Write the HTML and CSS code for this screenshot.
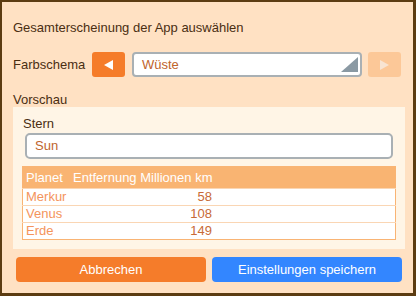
FILE: index.html
```html
<!DOCTYPE HTML>
<html>
<head>
    <title>Einstellungen</title>
    <link rel="stylesheet" href="styles.css">
</head>
<body>
    <div class="window">
        <div class="title">Gesamterscheinung der App auswählen</div>

        <div class="scheme-row">
            <span class="scheme-label">Farbschema</span>
            <button class="nav-btn">
                <svg width="10" height="10" viewBox="0 0 10 10"><polygon points="9,0 9,10 0,5" fill="#ffffff"/></svg>
            </button>
            <div class="select">
                <span>Wüste</span>
                <svg class="select-corner" width="17" height="15" viewBox="0 0 17 15"><polygon points="17,0 17,15 0,15" fill="#8a99a3"/></svg>
            </div>
            <button class="nav-btn disabled">
                <svg width="10" height="10" viewBox="0 0 10 10"><polygon points="0,0 0,10 9,5" fill="#f8e4d2"/></svg>
            </button>
        </div>

        <div class="section-label">Vorschau</div>
        <div class="preview">
            <div class="field-label">Stern</div>
            <div class="field">Sun</div>
            <table class="planets">
                <tr>
                    <th class="col-name">Planet</th>
                    <th class="col-dist">Entfernung Millionen km</th>
                    <th></th>
                </tr>
                <tr><td class="name">Merkur</td><td class="num">58</td><td></td></tr>
                <tr><td class="name">Venus</td><td class="num">108</td><td></td></tr>
                <tr><td class="name">Erde</td><td class="num">149</td><td></td></tr>
            </table>
        </div>

        <div class="actions">
            <button class="btn btn-cancel">Abbrechen</button>
            <button class="btn btn-save">Einstellungen speichern</button>
        </div>
    </div>
</body>
</html>
```
FILE: styles.css
```css
body {
    margin: 0;
    font-family: "Liberation Sans", Arial, sans-serif;
    font-size: 13px;
}

.window {
    width: 416px;
    height: 296px;
    box-sizing: border-box;
    background: #ffe1c3;
    border-style: solid;
    border-color: #5c3c12;
    border-width: 2px 3px 3px 2px;
    padding: 18px 8px 0px 11px;
    color: #4a2e12;
}

.title {
    line-height: 16px;
    height: 16px;
}

.scheme-row {
    display: flex;
    align-items: center;
    margin-top: 16px;
    height: 25px;
}

.scheme-label {
    width: 79px;
}

.nav-btn {
    width: 33px;
    height: 25px;
    border: none;
    border-radius: 3px;
    background: #f57c2a;
    padding: 0;
    display: flex;
    align-items: center;
    justify-content: center;
}

.nav-btn.disabled {
    background: #fcc898;
    margin-left: 6px;
}

.select {
    position: relative;
    width: 230px;
    height: 25px;
    box-sizing: border-box;
    margin-left: 7px;
    border: 2px solid #a9b0b4;
    border-radius: 4px;
    background: #ffffff;
    color: #c0642c;
    padding-left: 8px;
    line-height: 21px;
}

.select-corner {
    position: absolute;
    right: 2px;
    bottom: 3px;
}

.section-label {
    margin-top: 15px;
    line-height: 15px;
    height: 15px;
}

.preview {
    width: 392px;
    box-sizing: border-box;
    background: #fff5e6;
    padding: 9px 9px 9px 9px;
}

.field-label {
    line-height: 16px;
    padding-left: 1px;
}

.field {
    margin: 1px 3px 0px 3px;
    height: 26px;
    box-sizing: border-box;
    border: 2px solid #a9b0b4;
    border-radius: 5px;
    background: #ffffff;
    color: #c0642c;
    padding-left: 8px;
    line-height: 22px;
}

.planets {
    margin-top: 7px;
    width: 100%;
    table-layout: fixed;
    border-collapse: collapse;
    background: #ffffff;
    border: 1px solid #f9b474;
}

.planets th {
    background: #f9b472;
    color: #ffffff;
    font-weight: normal;
    text-align: left;
    height: 21px;
    padding: 0px 3px;
    white-space: nowrap;
}

.planets td {
    height: 16px;
    padding: 0px 3px;
    border-top: 1px solid #fad6b4;
    line-height: 16px;
}

.col-name {
    width: 41px;
}

.col-dist {
    width: 139px;
}

.name {
    color: #f4945c;
}

.num {
    color: #c86a36;
    text-align: right;
}

.actions {
    display: flex;
    gap: 6px;
    margin-top: 8px;
    margin-left: 3px;
}

.btn {
    width: 190px;
    height: 25px;
    border: none;
    border-radius: 4px;
    color: #ffffff;
    font-family: "Liberation Sans", Arial, sans-serif;
    font-size: 13px;
    padding: 0;
}

.btn-cancel {
    background: #f57c2a;
}

.btn-save {
    background: #3386ff;
}
```
